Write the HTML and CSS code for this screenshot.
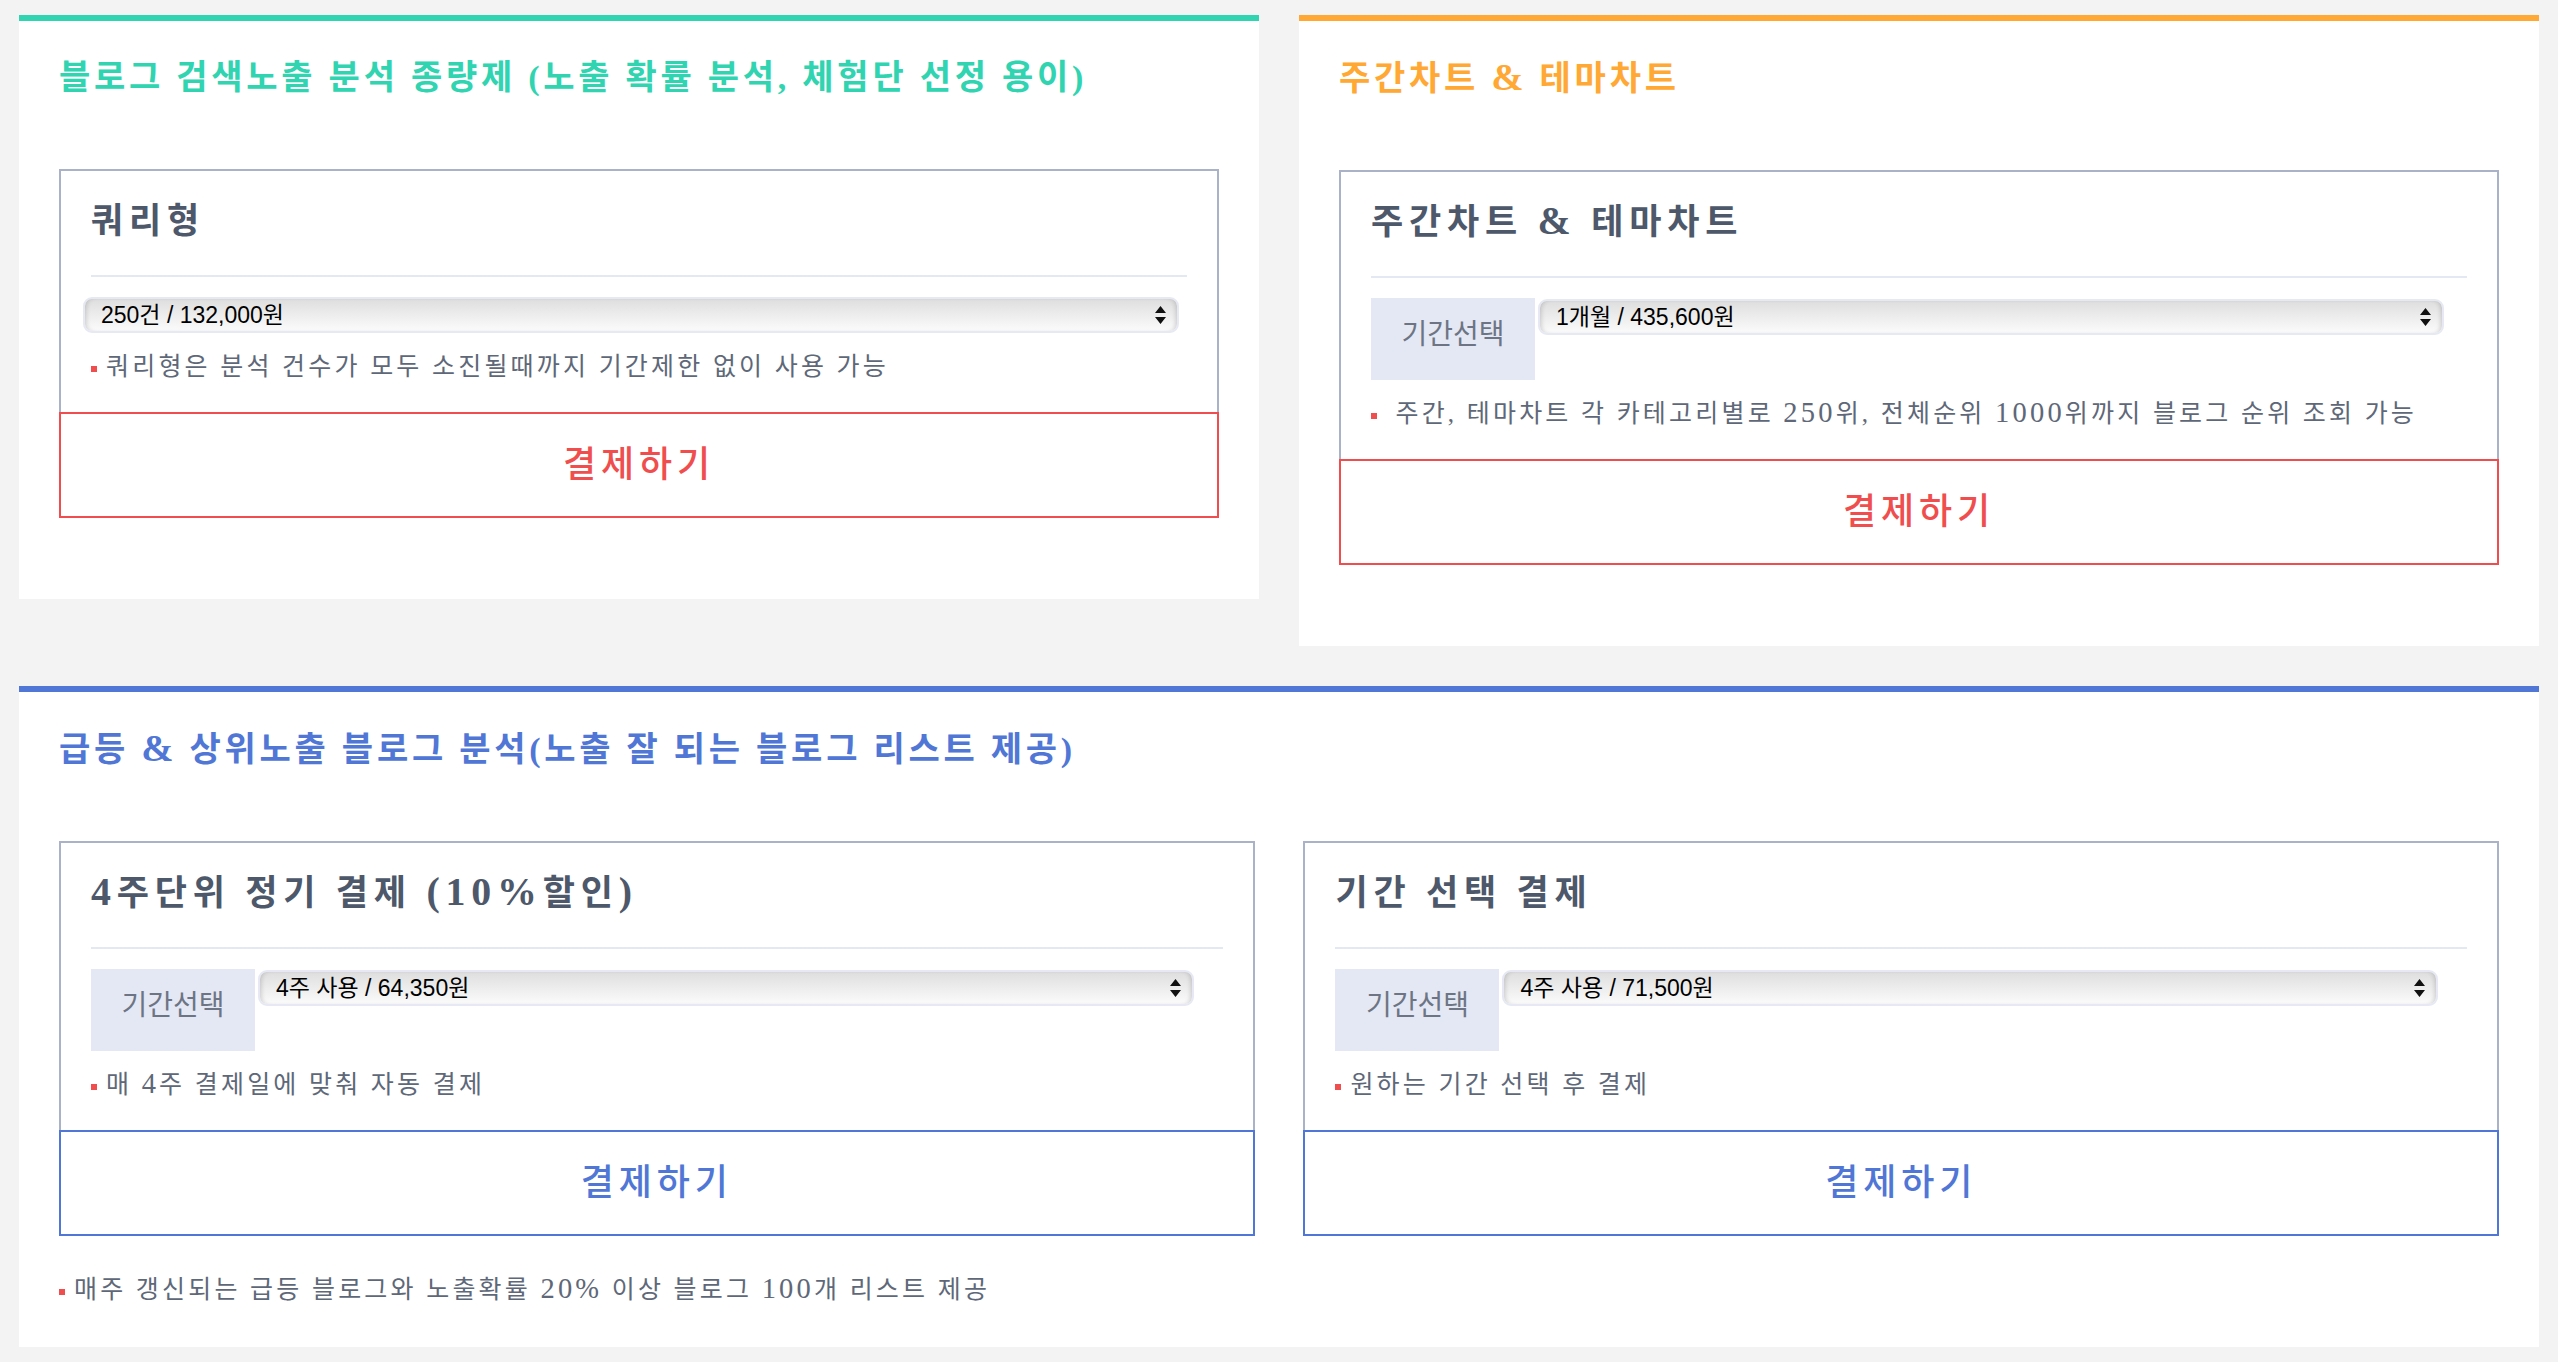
FILE: index.html
```html
<!DOCTYPE html>
<html lang="ko">
<head>
<meta charset="utf-8">
<title>요금제</title>
<link rel="stylesheet" href="styles.css">
</head>
<body>
<div class="page">
  <div class="row-top">
    <section class="card card-teal">
      <h2 class="card-title">블로그 검색노출 분석 종량제 (노출 확률 분석, 체험단 선정 용이)</h2>
      <div class="plan plan-red">
        <h3 class="plan-title">쿼리형</h3>
        <div class="plan-body">
          <div class="sel sel-full">
            <select><option>250건 / 132,000원</option></select>
            <svg class="sel-arrow" width="11" height="18" viewBox="0 0 11 18"><path d="M5.5 0L11 7H0Z M0 11H11L5.5 18Z" fill="#111"/></svg>
          </div>
        </div>
        <p class="note"><span class="dot"></span>쿼리형은 분석 건수가 모두 소진될때까지 기간제한 없이 사용 가능</p>
        <a class="pay-btn" href="#">결제하기</a>
      </div>
    </section>
    <section class="card card-orange">
      <h2 class="card-title">주간차트 <span class="lat">&amp;</span> 테마차트</h2>
      <div class="plan plan-red">
        <h3 class="plan-title">주간차트 <span class="lat">&amp;</span> 테마차트</h3>
        <div class="plan-body">
          <div class="label">기간선택</div>
          <div class="sel">
            <select><option>1개월 / 435,600원</option></select>
            <svg class="sel-arrow" width="11" height="18" viewBox="0 0 11 18"><path d="M5.5 0L11 7H0Z M0 11H11L5.5 18Z" fill="#111"/></svg>
          </div>
        </div>
        <p class="note"><span class="dot"></span> 주간, 테마차트 각 카테고리별로 <span class="lat">250</span>위, 전체순위 <span class="lat">1000</span>위까지 블로그 순위 조회 가능</p>
        <a class="pay-btn" href="#">결제하기</a>
      </div>
    </section>
  </div>
  <section class="card card-blue card-wide">
    <h2 class="card-title">급등 <span class="lat">&amp;</span> 상위노출 블로그 분석(노출 잘 되는 블로그 리스트 제공)</h2>
    <div class="plans">
      <div class="plan plan-blue">
        <h3 class="plan-title"><span class="lat">4</span>주단위 정기 결제 <span class="lat">(10%</span>할인<span class="lat">)</span></h3>
        <div class="plan-body">
          <div class="label">기간선택</div>
          <div class="sel">
            <select><option>4주 사용 / 64,350원</option></select>
            <svg class="sel-arrow" width="11" height="18" viewBox="0 0 11 18"><path d="M5.5 0L11 7H0Z M0 11H11L5.5 18Z" fill="#111"/></svg>
          </div>
        </div>
        <p class="note"><span class="dot"></span>매 <span class="lat">4</span>주 결제일에 맞춰 자동 결제</p>
        <a class="pay-btn" href="#">결제하기</a>
      </div>
      <div class="plan plan-blue">
        <h3 class="plan-title">기간 선택 결제</h3>
        <div class="plan-body">
          <div class="label">기간선택</div>
          <div class="sel">
            <select><option>4주 사용 / 71,500원</option></select>
            <svg class="sel-arrow" width="11" height="18" viewBox="0 0 11 18"><path d="M5.5 0L11 7H0Z M0 11H11L5.5 18Z" fill="#111"/></svg>
          </div>
        </div>
        <p class="note"><span class="dot"></span>원하는 기간 선택 후 결제</p>
        <a class="pay-btn" href="#">결제하기</a>
      </div>
    </div>
    <p class="note note-footer"><span class="dot"></span>매주 갱신되는 급등 블로그와 노출확률 <span class="lat">20%</span> 이상 블로그 <span class="lat">100</span>개 리스트 제공</p>
  </section>
</div>
</body>
</html>
```

FILE: styles.css
```css
* { box-sizing: border-box; }

html, body {
  margin: 0;
  background: #f3f3f3;
}

body {
  font-family: "Liberation Serif", "Noto Sans CJK KR", serif;
  color: #5e6878;
}

.page {
  width: 2520px;
  margin: 0 auto;
  padding-top: 15px;
}

.row-top {
  display: flex;
  gap: 40px;
  align-items: flex-start;
}

.card {
  flex: 1;
  background: #fff;
  border-top: 6px solid;
  padding: 37px 40px 81px;
}

.card-teal { border-top-color: #30d4b0; }
.card-orange { border-top-color: #ffa834; }
.card-blue { border-top-color: #5077d6; }

.card-wide {
  margin-top: 40px;
  padding-bottom: 40px;
}

.lat {
  font-size: 1.14em;
  line-height: 1;
}

.card-title {
  margin: 0 0 71px;
  font-size: 34px;
  line-height: 40px;
  letter-spacing: 0.11em;
  font-weight: 700;
}

.card-teal .card-title { color: #30d4b0; }
.card-orange .card-title { color: #ffa834; }
.card-blue .card-title { color: #5077d6; }

.plans {
  display: flex;
  justify-content: space-between;
}

.plans .plan { width: 49%; }

.plan {
  border: 2px solid #a9b2c6;
  padding: 0 30px;
  background: #fff;
}

.plan-title {
  margin: 0;
  padding: 27px 0 29px;
  font-size: 35px;
  line-height: 48px;
  letter-spacing: 5.8px;
  font-weight: 700;
  color: #4d586a;
  border-bottom: 2px solid #e4e8f3;
}

.plan-body {
  display: flex;
  align-items: flex-start;
  padding-top: 20px;
}

.label {
  flex: none;
  width: 164px;
  height: 82px;
  background: #e4e8f4;
  color: #6d7584;
  font-size: 28px;
  line-height: 74px;
  text-align: center;
}

.sel {
  position: relative;
  width: 82.7%;
  margin-left: 3px;
  margin-top: 1px;
}

.sel-full {
  width: 100%;
  margin-left: -8px;
  margin-top: 0;
}

.sel select {
  display: block;
  width: 100%;
  height: 36px;
  margin: 0;
  padding: 0 40px 0 16px;
  -webkit-appearance: none;
  appearance: none;
  border: 2px solid #e6e9f3;
  border-radius: 9px;
  background: linear-gradient(to bottom, #dedede 0%, #eaeaea 40%, #fbfbfb 100%);
  box-shadow: inset 4px 0 5px -3px rgba(0, 0, 0, 0.18), inset -4px 0 5px -3px rgba(0, 0, 0, 0.18);
  font-family: "Liberation Sans", "Noto Sans CJK KR", sans-serif;
  font-size: 23px;
  color: #000;
  outline: none;
}

.sel-arrow {
  position: absolute;
  right: 13px;
  top: 9px;
  pointer-events: none;
}

.note {
  margin: 17px 0 28px;
  font-size: 25px;
  line-height: 34px;
  letter-spacing: 3.2px;
  color: #5e6878;
}

.dot {
  display: inline-block;
  width: 6px;
  height: 6px;
  margin-right: 9px;
  background: #f04e4e;
  vertical-align: 3px;
}

.note-footer {
  margin: 37px 0 0;
}

.pay-btn {
  display: block;
  height: 106px;
  margin: 0 -32px -2px;
  border: 2px solid;
  text-align: center;
  font-size: 36px;
  line-height: 102px;
  letter-spacing: 0.135em;
  text-decoration: none;
  font-weight: 500;
}

.plan-red .pay-btn { color: #f04e4e; border-color: #f04e4e; }
.plan-blue .pay-btn { color: #5077d6; border-color: #5077d6; }
```
